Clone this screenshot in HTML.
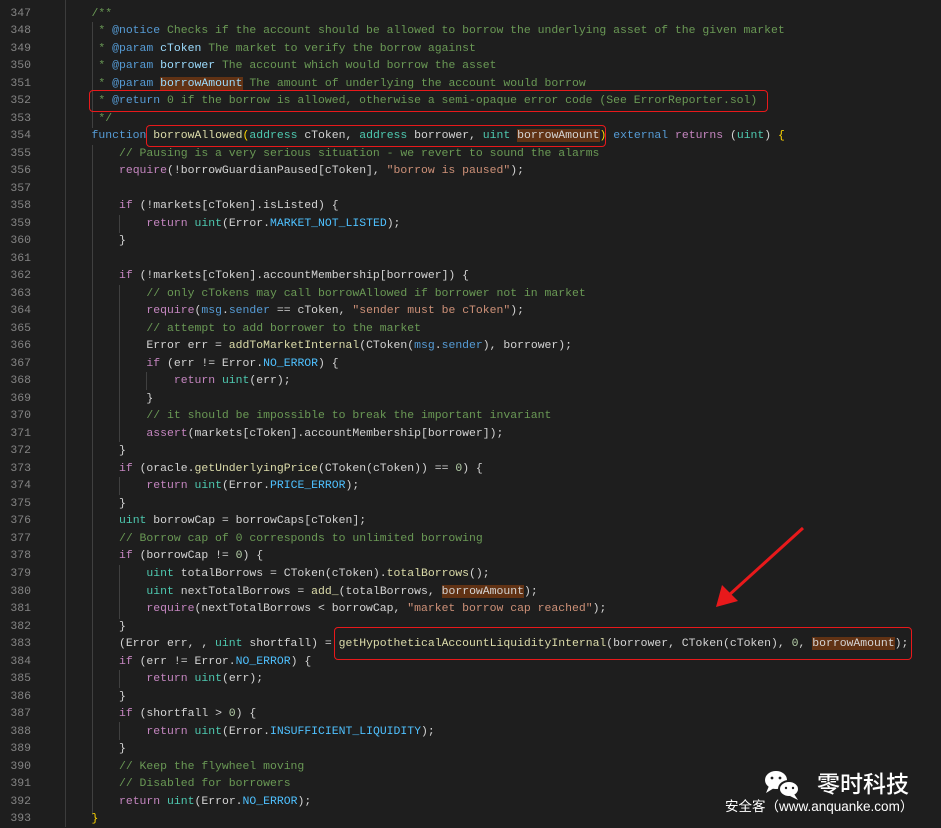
<!DOCTYPE html>
<html><head><meta charset="utf-8"><style>
body{margin:0;width:941px;height:827px;background:#1e1e1e;overflow:hidden;position:relative;font-family:"Liberation Mono",monospace;}
.ln{position:absolute;left:0;top:4.5px;width:31px;text-align:right;color:#858585;font-size:11.45px;line-height:17.52px;white-space:pre;}
.code{position:absolute;left:91.5px;top:4.5px;color:#d4d4d4;font-size:11.45px;line-height:17.52px;white-space:pre;margin:0;font-family:"Liberation Mono",monospace;}
.c{color:#6a9955}.k{color:#569cd6}.f{color:#dcdcaa}.t{color:#4ec9b0}.s{color:#ce9178}.n{color:#b5cea8}.p{color:#c586c0}.v{color:#9cdcfe}.e{color:#4fc1ff}.y{color:#ffd700}.h{background:#613214}
.box{position:absolute;border:1.5px solid #e8191b;border-radius:4px;}
.g{position:absolute;width:1px;background:#404040;}
</style></head><body>
<div style="position:absolute;left:65px;top:0;width:1px;height:827px;background:#3c3c3c"></div>
<div class="g" style="left:92px;top:22px;height:106px"></div>
<div class="g" style="left:92px;top:145px;height:670px"></div>
<div class="g" style="left:119px;top:215px;height:18px"></div>
<div class="g" style="left:119px;top:285px;height:157px"></div>
<div class="g" style="left:146px;top:372px;height:18px"></div>
<div class="g" style="left:119px;top:477px;height:18px"></div>
<div class="g" style="left:119px;top:565px;height:54px"></div>
<div class="g" style="left:119px;top:670px;height:18px"></div>
<div class="g" style="left:119px;top:722px;height:18px"></div>
<div class="ln">347
348
349
350
351
352
353
354
355
356
357
358
359
360
361
362
363
364
365
366
367
368
369
370
371
372
373
374
375
376
377
378
379
380
381
382
383
384
385
386
387
388
389
390
391
392
393</div>
<pre class="code"><span class="c">/**</span>
<span class="c"> * </span><span class="k">@notice</span><span class="c"> Checks if the account should be allowed to borrow the underlying asset of the given market</span>
<span class="c"> * </span><span class="k">@param</span> <span class="v">cToken</span><span class="c"> The market to verify the borrow against</span>
<span class="c"> * </span><span class="k">@param</span> <span class="v">borrower</span><span class="c"> The account which would borrow the asset</span>
<span class="c"> * </span><span class="k">@param</span> <span class="v h">borrowAmount</span><span class="c"> The amount of underlying the account would borrow</span>
<span class="c"> * </span><span class="k">@return</span><span class="c"> 0 if the borrow is allowed, otherwise a semi-opaque error code (See ErrorReporter.sol)</span>
<span class="c"> */</span>
<span class="k">function</span> <span class="f">borrowAllowed</span><span class="y">(</span><span class="t">address</span> cToken, <span class="t">address</span> borrower, <span class="t">uint</span> <span class="h">borrowAmount</span><span class="y">)</span> <span class="k">external</span> <span class="p">returns</span> (<span class="t">uint</span>) <span class="y">{</span>
    <span class="c">// Pausing is a very serious situation - we revert to sound the alarms</span>
    <span class="p">require</span>(!borrowGuardianPaused[cToken], <span class="s">"borrow is paused"</span>);

    <span class="p">if</span> (!markets[cToken].isListed) {
        <span class="p">return</span> <span class="t">uint</span>(Error.<span class="e">MARKET_NOT_LISTED</span>);
    }

    <span class="p">if</span> (!markets[cToken].accountMembership[borrower]) {
        <span class="c">// only cTokens may call borrowAllowed if borrower not in market</span>
        <span class="p">require</span>(<span class="k">msg</span>.<span class="k">sender</span> == cToken, <span class="s">"sender must be cToken"</span>);
        <span class="c">// attempt to add borrower to the market</span>
        Error err = <span class="f">addToMarketInternal</span>(CToken(<span class="k">msg</span>.<span class="k">sender</span>), borrower);
        <span class="p">if</span> (err != Error.<span class="e">NO_ERROR</span>) {
            <span class="p">return</span> <span class="t">uint</span>(err);
        }
        <span class="c">// it should be impossible to break the important invariant</span>
        <span class="p">assert</span>(markets[cToken].accountMembership[borrower]);
    }
    <span class="p">if</span> (oracle.<span class="f">getUnderlyingPrice</span>(CToken(cToken)) == <span class="n">0</span>) {
        <span class="p">return</span> <span class="t">uint</span>(Error.<span class="e">PRICE_ERROR</span>);
    }
    <span class="t">uint</span> borrowCap = borrowCaps[cToken];
    <span class="c">// Borrow cap of 0 corresponds to unlimited borrowing</span>
    <span class="p">if</span> (borrowCap != <span class="n">0</span>) {
        <span class="t">uint</span> totalBorrows = CToken(cToken).<span class="f">totalBorrows</span>();
        <span class="t">uint</span> nextTotalBorrows = <span class="f">add_</span>(totalBorrows, <span class="h">borrowAmount</span>);
        <span class="p">require</span>(nextTotalBorrows &lt; borrowCap, <span class="s">"market borrow cap reached"</span>);
    }
    (Error err, , <span class="t">uint</span> shortfall) = <span class="f">getHypotheticalAccountLiquidityInternal</span>(borrower, CToken(cToken), <span class="n">0</span>, <span class="h">borrowAmount</span>);
    <span class="p">if</span> (err != Error.<span class="e">NO_ERROR</span>) {
        <span class="p">return</span> <span class="t">uint</span>(err);
    }
    <span class="p">if</span> (shortfall &gt; <span class="n">0</span>) {
        <span class="p">return</span> <span class="t">uint</span>(Error.<span class="e">INSUFFICIENT_LIQUIDITY</span>);
    }
    <span class="c">// Keep the flywheel moving</span>
    <span class="c">// Disabled for borrowers</span>
    <span class="p">return</span> <span class="t">uint</span>(Error.<span class="e">NO_ERROR</span>);
<span class="y">}</span></pre>
<div class="box" style="left:89px;top:90px;width:677px;height:20px"></div>
<div class="box" style="left:146px;top:125px;width:458px;height:20px"></div>
<div class="box" style="left:334px;top:627px;width:576px;height:31px"></div>
<svg style="position:absolute;left:0;top:0" width="941" height="827">
<line x1="803" y1="528" x2="728" y2="596" stroke="#e8191b" stroke-width="3"/>
<polygon points="716,607 722,585 738,601" fill="#e8191b"/>
<g fill="#fff">
<ellipse cx="776" cy="780" rx="11" ry="9"/>
<ellipse cx="789" cy="789" rx="10" ry="8" stroke="#1e1e1e" stroke-width="2"/>
<polygon points="769,786 766,793 774,788"/>
<polygon points="794,794 798,800 790,796"/>
</g>
<g fill="#1e1e1e"><circle cx="772" cy="778" r="1.4"/><circle cx="780" cy="778" r="1.4"/><circle cx="786" cy="788" r="1.2"/><circle cx="793" cy="788" r="1.2"/></g>
</svg>
<div style="position:absolute;left:817px;top:768px;color:#fff;font:500 23px 'Noto Sans CJK SC',sans-serif;line-height:28px">零时科技</div>
<div style="position:absolute;left:725px;top:798px;color:#fff;font:13.5px 'Liberation Sans','Noto Sans CJK SC',sans-serif;line-height:18px;white-space:nowrap">安全客（www.anquanke.com）</div>
</body></html>
